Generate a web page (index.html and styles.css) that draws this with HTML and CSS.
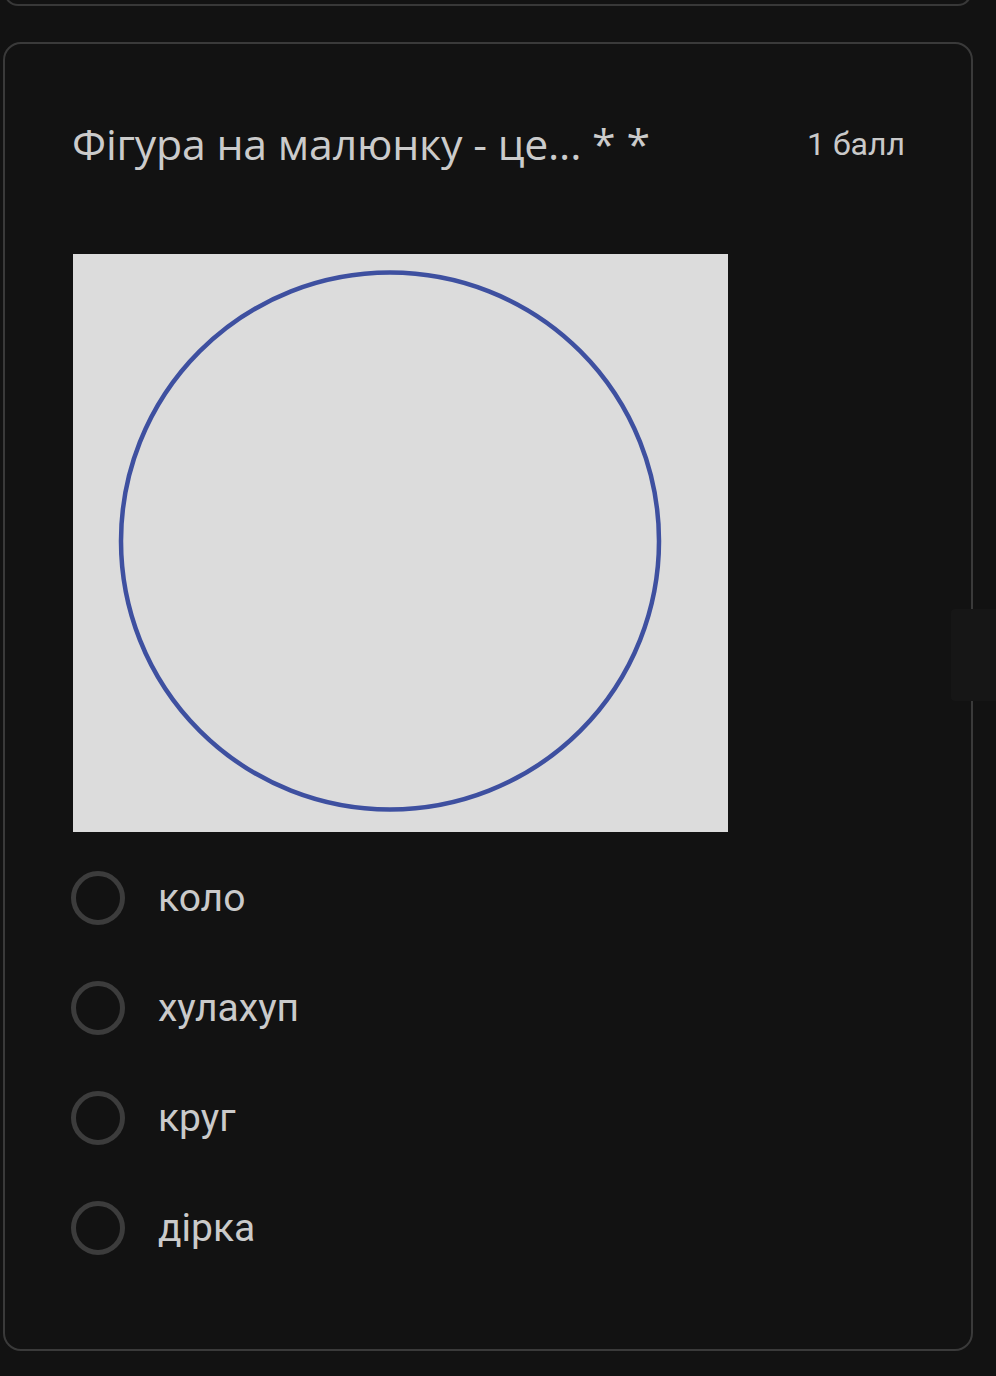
FILE: index.html
```html
<!DOCTYPE html>
<html lang="uk">
<head>
<meta charset="utf-8">
<link rel="stylesheet" href="styles.css">
</head>
<body>
<div class="prev-card"></div>
<div class="card">
  <div class="header">
    <div class="title">Фігура на малюнку - це... * *</div>
    <div class="points">1 балл</div>
  </div>
  <div class="picture">
    <svg width="655" height="578" viewBox="0 0 655 578">
      <rect width="655" height="578" fill="#dcdcdc"/>
      <ellipse cx="317" cy="287" rx="269" ry="268.5" fill="none" stroke="#3e50a0" stroke-width="4.5"/>
    </svg>
  </div>
  <div class="options">
    <label class="option"><span class="radio"></span><span class="opt-text">коло</span></label>
    <label class="option"><span class="radio"></span><span class="opt-text">хулахуп</span></label>
    <label class="option"><span class="radio"></span><span class="opt-text">круг</span></label>
    <label class="option"><span class="radio"></span><span class="opt-text">дірка</span></label>
  </div>
</div>
<div class="side-tab"></div>
</body>
</html>
```
FILE: styles.css
```css
html, body {
  margin: 0;
  padding: 0;
  background: #121212;
}
body {
  width: 996px;
  height: 1376px;
  overflow: hidden;
  position: relative;
  font-family: Roboto, "Noto Sans", sans-serif;
  color: #c9c9c9;
}
.prev-card {
  margin: -20px 24px 0 4px;
  height: 24px;
  border: 2px solid #383838;
  border-top: none;
  border-radius: 0 0 14px 14px;
}
.card {
  margin: 36px 0 0 3px;
  width: 966px;
  height: 1305px;
  border: 2px solid #3a3a3a;
  border-radius: 18px;
  box-sizing: content-box;
  padding: 0;
}
.header {
  display: flex;
  justify-content: space-between;
  align-items: center;
  padding: 74px 66px 0 67px;
  height: 52px;
}
.title {
  font-family: "Open Sans", "Noto Sans", sans-serif;
  font-size: 42.8px;
  line-height: 52px;
  color: #cbcbcb;
  letter-spacing: -0.2px;
}
.points {
  font-family: Roboto, sans-serif;
  font-size: 32px;
  line-height: 52px;
  color: #c9c9c9;
}
.picture {
  margin: 84px 0 0 68px;
  width: 655px;
  height: 578px;
}
.picture svg {
  display: block;
}
.options {
  margin: 11px 0 0 66px;
  display: flex;
  flex-direction: column;
}
.option {
  display: flex;
  align-items: center;
  height: 110px;
}
.radio {
  width: 44px;
  height: 44px;
  border: 5px solid #3c3c3c;
  border-radius: 50%;
  flex: none;
}
.opt-text {
  margin-left: 33px;
  font-size: 39px;
  color: #cacaca;
  line-height: 48px;
}
.side-tab {
  position: absolute;
  right: 0;
  top: 609px;
  width: 45px;
  height: 92px;
  background: #161616;
  border-radius: 4px 0 0 4px;
}
```
